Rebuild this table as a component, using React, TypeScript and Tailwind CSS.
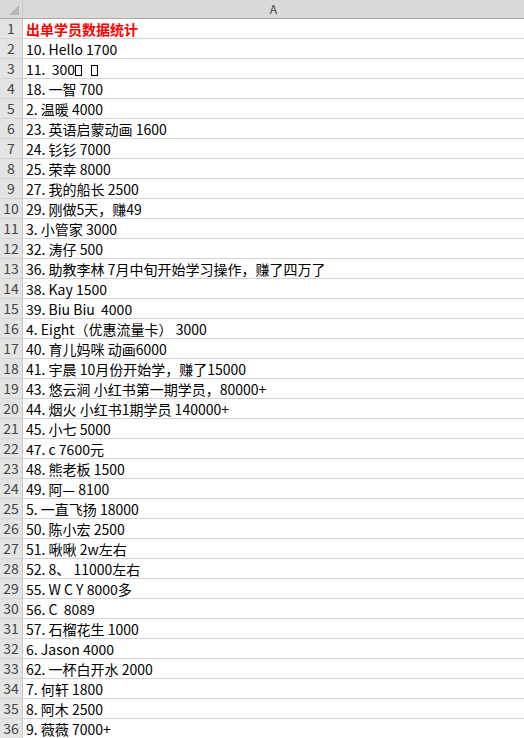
const rows: string[] = [
  "出单学员数据统计",
  "10. Hello 1700",
  "__TOFU__",
  "18. 一智 700",
  "2. 温暖 4000",
  "23. 英语启蒙动画 1600",
  "24. 钐钐 7000",
  "25. 荣幸 8000",
  "27. 我的船长 2500",
  "29. 刚做5天，赚49",
  "3. 小管家 3000",
  "32. 涛仔 500",
  "36. 助教李林 7月中旬开始学习操作，赚了四万了",
  "38. Kay 1500",
  "39. Biu Biu  4000",
  "4. Eight（优惠流量卡） 3000",
  "40. 育儿妈咪 动画6000",
  "41. 宇晨 10月份开始学，赚了15000",
  "43. 悠云涧 小红书第一期学员，80000+",
  "44. 烟火 小红书1期学员 140000+",
  "45. 小七 5000",
  "47. c 7600元",
  "48. 熊老板 1500",
  "49. 阿— 8100",
  "5. 一直飞扬 18000",
  "50. 陈小宏 2500",
  "51. 啾啾 2w左右",
  "52. 8、 11000左右",
  "55. W C Y 8000多",
  "56. C  8089",
  "57. 石榴花生 1000",
  "6. Jason 4000",
  "62. 一杯白开水 2000",
  "7. 何轩 1800",
  "8. 阿木 2500",
  "9. 薇薇 7000+",
]

function Tofu() {
  return <span className="inline-block w-[7px] h-[11px] border border-black align-[-1px]" />
}

export default function App() {
  return (
    <div
      className="w-[524px] h-[738px] overflow-hidden bg-white text-[14px] text-black"
      style={{ fontFamily: '"Noto Sans CJK SC", "Noto Sans", sans-serif' }}
    >
      {/* column header */}
      <div className="flex h-[19px] bg-[#dadada] border-b border-[#a9a9a9]">
        <div className="relative w-[23px] shrink-0 border-r border-[#c6c6c6]">
          <div className="absolute right-[3px] bottom-[3px] w-0 h-0 border-l-[10px] border-l-transparent border-b-[10px] border-b-[#b7b7b7]" />
        </div>
        <div className="flex-1 flex items-center justify-center text-[12px] text-[#444]">
          A
        </div>
      </div>

      {rows.map((text, i) => (
        <div key={i} className="flex h-[20px] border-b border-[#d4d4d4]">
          <div className="w-[23px] shrink-0 flex items-center justify-center bg-[#e4e4e4] border-r border-[#c6c6c6] text-[14px] text-[#444]">
            {i + 1}
          </div>
          <div className="flex-1 flex items-center pl-[3px] whitespace-pre leading-none">
            {i === 0 ? (
              <span className="font-bold text-[#ff0000]">{text}</span>
            ) : text === "__TOFU__" ? (
              <span>
                11.  300<Tofu />   <Tofu />
              </span>
            ) : (
              <span>{text}</span>
            )}
          </div>
        </div>
      ))}
    </div>
  )
}
